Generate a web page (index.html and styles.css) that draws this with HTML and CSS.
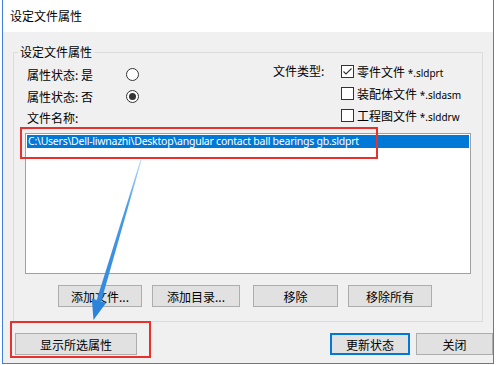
FILE: index.html
```html
<!DOCTYPE html>
<html lang="zh-CN">
<head>
    <meta charset="UTF-8">
    <meta name="viewport" content="width=device-width, initial-scale=1.0">
    <title>设定文件属性</title>
    <link rel="stylesheet" href="styles.css">
</head>
<body>
    <div class="window">
        <div class="titlebar">设定文件属性</div>
        <div class="client">
            <fieldset class="group">
                <legend>设定文件属性</legend>
                <div class="top">
                    <div class="left">
                        <div class="radio-row">
                            <span class="label">属性状态: 是</span>
                            <span class="radio"></span>
                        </div>
                        <div class="radio-row">
                            <span class="label">属性状态: 否</span>
                            <span class="radio checked"></span>
                        </div>
                        <div class="name-label">文件名称:</div>
                    </div>
                    <div class="right">
                        <span class="type-label">文件类型:</span>
                        <div class="checks">
                            <div class="check-row">
                                <span class="box">
                                    <svg width="11" height="11" viewBox="0 0 11 11"><path d="M1.5 5.5 L4 8 L9.5 2.5" fill="none" stroke="#333" stroke-width="1.1"/></svg>
                                </span>
                                <span>零件文件 <small>*.sldprt</small></span>
                            </div>
                            <div class="check-row">
                                <span class="box"></span>
                                <span>装配体文件 <small>*.sldasm</small></span>
                            </div>
                            <div class="check-row">
                                <span class="box"></span>
                                <span>工程图文件 <small>*.slddrw</small></span>
                            </div>
                        </div>
                    </div>
                </div>
                <div class="listbox">
                    <div class="item selected">C:\Users\Dell-liwnazhi\Desktop\angular contact ball bearings gb.sldprt</div>
                </div>
                <div class="btn-row">
                    <button class="btn w84">添加文件...</button>
                    <button class="btn w88">添加目录...</button>
                    <button class="btn w85 push">移除</button>
                    <button class="btn w84">移除所有</button>
                </div>
            </fieldset>
            <div class="bottom-row">
                <button class="btn show">显示所选属性</button>
                <div class="actions">
                    <button class="btn default">更新状态</button>
                    <button class="btn close">关闭</button>
                </div>
            </div>
        </div>
    </div>

    <!-- annotations drawn over the screenshot -->
    <div class="mark mark-list"></div>
    <div class="mark mark-btn"></div>
    <svg class="arrow" width="496" height="365" viewBox="0 0 496 365">
        <defs>
            <linearGradient id="fade" x1="141" y1="160" x2="95" y2="320" gradientUnits="userSpaceOnUse">
                <stop offset="0" stop-color="#b5d8f7"/>
                <stop offset="0.3" stop-color="#4a9be6"/>
                <stop offset="1" stop-color="#2b84dc"/>
            </linearGradient>
        </defs>
        <polygon points="141.5,160 140.5,160 96.6,300.2 101.2,301.6" fill="url(#fade)"/>
        <polygon points="93.5,320 91.8,298.6 106,302.9" fill="#2b84dc"/>
    </svg>
</body>
</html>
```

FILE: styles.css
```css
body {
    margin: 0;
    background: #fff;
    font-family: "Noto Sans CJK SC", "Noto Sans", sans-serif;
    font-size: 12px;
    color: #000;
}
.window {
    margin-left: 2px;
    width: 490px;
    height: 363px;
    border: 1px solid #3f80d8;
    border-top: none;
    display: flex;
    flex-direction: column;
}
.titlebar {
    height: 32px;
    line-height: 32px;
    padding-left: 7px;
    background: #fff;
}
.client {
    flex: 1;
    background: #f0f0f0;
    padding: 12px 10px 0 10px;
}
.group {
    margin: 0;
    padding: 0 11px 14px 11px;
    border: 1px solid #dcdcdc;
    min-width: 0;
}
.group legend {
    margin-left: -7px;
    padding: 0 2px;
    line-height: 16px;
}
.top {
    display: flex;
    height: 66px;
    margin-bottom: 7px;
}
.left {
    flex-shrink: 0;
    width: 246px;
    padding-top: 3px;
    padding-left: 2px;
}
.radio-row {
    display: flex;
    align-items: center;
    height: 22px;
}
.radio-row .label {
    width: 99px;
}
.radio {
    width: 11px;
    height: 11px;
    border: 1px solid #333;
    border-radius: 50%;
    background: #fff;
    display: flex;
    align-items: center;
    justify-content: center;
}
.radio.checked::after {
    content: "";
    width: 7px;
    height: 7px;
    border-radius: 50%;
    background: #333;
}
.name-label {
    margin-top: 3px;
    line-height: 16px;
}
.right {
    display: flex;
    flex-shrink: 0;
}
.type-label {
    width: 68px;
    line-height: 22px;
}
.check-row {
    display: flex;
    align-items: center;
    height: 22px;
    white-space: nowrap;
}
.box {
    flex-shrink: 0;
    width: 11px;
    height: 11px;
    border: 1px solid #333;
    background: #fff;
    margin-right: 3px;
    display: flex;
    align-items: center;
    justify-content: center;
}
.check-row small {
    font-family: "Noto Sans", sans-serif;
    font-size: 10px;
}
.listbox {
    height: 137px;
    border: 1px solid #a0a0a0;
    background: #fff;
    padding: 1px;
}
.item {
    height: 13px;
    line-height: 13px;
    padding-left: 1px;
    font-family: "Noto Sans", sans-serif;
    font-size: 10.5px;
    letter-spacing: -0.24px;
    white-space: nowrap;
}
.item.selected {
    background: #0078d7;
    color: #fff;
}
.btn-row {
    display: flex;
    gap: 10px;
    margin-top: 11px;
    padding-left: 33px;
}
.btn {
    height: 22px;
    padding: 0;
    border: 1px solid #adadad;
    background: #e1e1e1;
    font-family: "Noto Sans CJK SC", sans-serif;
    font-size: 12px;
    color: #000;
}
.w84 { width: 84px; }
.w85 { width: 85px; }
.w88 { width: 88px; }
.push { margin-left: 3px; }
.bottom-row {
    display: flex;
    justify-content: space-between;
    margin-top: 11px;
    margin-left: 2px;
    margin-right: -10px;
}
.show {
    width: 122px;
}
.actions {
    display: flex;
    gap: 6px;
}
.default {
    width: 80px;
    border: 1px solid #0078d7;
    box-shadow: inset 0 0 0 1px #0078d7;
}
.close {
    width: 77px;
}
.mark {
    position: absolute;
    border: 2px solid #e9302c;
}
.mark-list {
    left: 20px;
    top: 127px;
    width: 354px;
    height: 28px;
}
.mark-btn {
    left: 10px;
    top: 321px;
    width: 137px;
    height: 33px;
}
.arrow {
    position: absolute;
    left: 0;
    top: 0;
    pointer-events: none;
}
```
